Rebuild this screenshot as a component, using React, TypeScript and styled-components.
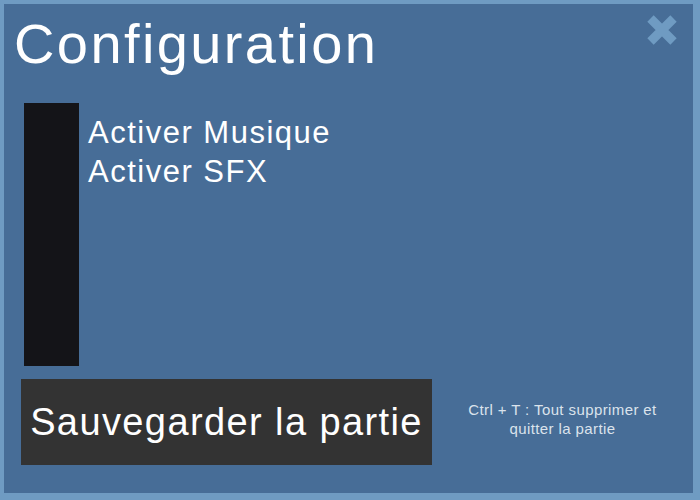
import React from "react";
import styled, { createGlobalStyle } from "styled-components";

const Global = createGlobalStyle`
  html, body { margin: 0; padding: 0; }
  body {
    width: 700px;
    height: 500px;
    background: #6f9bc2;
    font-family: "Liberation Sans", Arial, sans-serif;
    overflow: hidden;
  }
`;

const Panel = styled.div`
  box-sizing: border-box;
  margin: 4px 7px 7px 4px;
  width: 689px;
  height: 489px;
  background: #476d97;
  display: flex;
  flex-direction: column;
  position: relative;
`;

const Title = styled.h1`
  box-sizing: border-box;
  margin: 0;
  height: 92px;
  padding: 12px 0 0 10px;
  font-size: 56px;
  line-height: 56px;
  font-weight: 400;
  color: #ffffff;
  letter-spacing: 2.4px;
`;

const CloseButton = styled.button`
  position: absolute;
  top: 11px;
  right: 16px;
  width: 30px;
  height: 30px;
  padding: 0;
  border: none;
  background: transparent;
  cursor: pointer;
  display: flex;
`;

const Content = styled.div`
  display: flex;
  align-items: flex-start;
  gap: 9px;
  padding-left: 20px;
  height: 263px;
  margin-top: 7px;
`;

const Sidebar = styled.div`
  width: 55px;
  height: 263px;
  background: #141418;
`;

const OptionList = styled.ul`
  list-style: none;
  margin: 0;
  padding: 10px 0 0 0;
  display: flex;
  flex-direction: column;
`;

const Option = styled.li`
  font-size: 31px;
  line-height: 39px;
  color: #ffffff;
  letter-spacing: 1.5px;
`;

const Footer = styled.div`
  display: flex;
  align-items: center;
  margin-top: 13px;
  padding-left: 17px;
`;

const SaveButton = styled.button`
  width: 411px;
  height: 86px;
  border: none;
  background: #333333;
  color: #ffffff;
  font-family: "Liberation Sans", Arial, sans-serif;
  font-size: 38px;
  letter-spacing: 1.4px;
  padding: 0;
  cursor: pointer;
`;

const HintArea = styled.div`
  flex: 1;
  display: flex;
  justify-content: center;
`;

const Hint = styled.p`
  width: 222px;
  margin: 0 0 6px;
  text-align: center;
  font-size: 15px;
  line-height: 19px;
  letter-spacing: 0.4px;
  color: #dbe3ec;
`;

export default function App() {
  return (
    <>
      <Global />
      <Panel>
        <Title>Configuration</Title>
        <CloseButton aria-label="Fermer">
          <svg width="30" height="30" viewBox="0 0 30 30">
            <path d="M3.5 3.5 L26.5 26.5 M26.5 3.5 L3.5 26.5" stroke="#6f9bc2" strokeWidth="9" />
          </svg>
        </CloseButton>
        <Content>
          <Sidebar />
          <OptionList>
            <Option>Activer Musique</Option>
            <Option>Activer SFX</Option>
          </OptionList>
        </Content>
        <Footer>
          <SaveButton>Sauvegarder la partie</SaveButton>
          <HintArea>
            <Hint>Ctrl + T : Tout supprimer et quitter la partie</Hint>
          </HintArea>
        </Footer>
      </Panel>
    </>
  );
}
